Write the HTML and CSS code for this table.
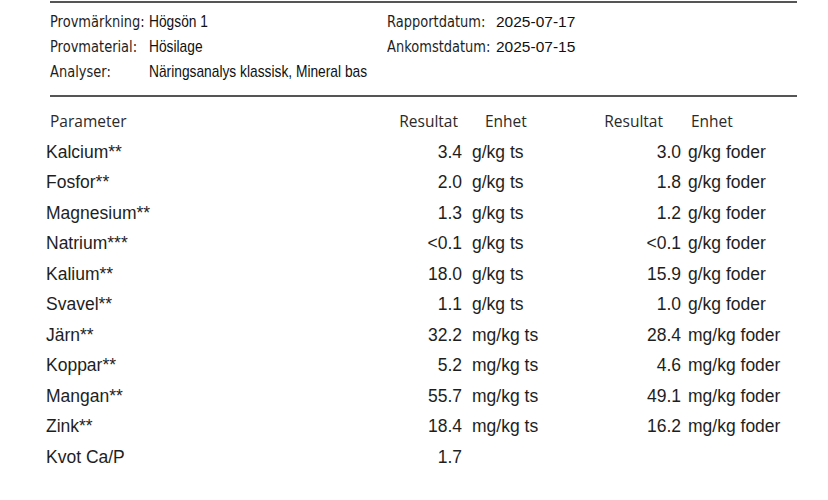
FILE: index.html
```html
<!DOCTYPE html>
<html lang="sv">
<head>
<meta charset="utf-8">
<title>Analysrapport</title>
<link rel="stylesheet" href="styles.css">
</head>
<body>
<div class="page">
  <div class="rule"></div>
  <div class="meta">
    <div class="cell"><span class="lbl">Provmärkning:</span></div><div class="cell"><span class="val">Högsön 1</span></div>
    <div class="cell"><span class="lbl">Rapportdatum:</span></div><div class="cell"><span class="date">2025-07-17</span></div>
    <div class="cell"><span class="lbl">Provmaterial:</span></div><div class="cell"><span class="val">Hösilage</span></div>
    <div class="cell"><span class="lbl">Ankomstdatum:</span></div><div class="cell"><span class="date">2025-07-15</span></div>
    <div class="cell"><span class="lbl">Analyser:</span></div><div class="cell"><span class="val">Näringsanalys klassisk, Mineral bas</span></div>
    <div class="cell"></div><div class="cell"></div>
  </div>
  <div class="rule"></div>

  <div class="table">
    <div class="th th-param">Parameter</div>
    <div class="th th-res1">Resultat</div>
    <div class="th th-unit1">Enhet</div>
    <div class="th th-res2">Resultat</div>
    <div class="th th-unit2">Enhet</div>

    <div class="td p">Kalcium**</div><div class="td n1">3.4</div><div class="td u1">g/kg ts</div><div class="td n2">3.0</div><div class="td u2">g/kg foder</div>
    <div class="td p">Fosfor**</div><div class="td n1">2.0</div><div class="td u1">g/kg ts</div><div class="td n2">1.8</div><div class="td u2">g/kg foder</div>
    <div class="td p">Magnesium**</div><div class="td n1">1.3</div><div class="td u1">g/kg ts</div><div class="td n2">1.2</div><div class="td u2">g/kg foder</div>
    <div class="td p">Natrium***</div><div class="td n1">&lt;0.1</div><div class="td u1">g/kg ts</div><div class="td n2">&lt;0.1</div><div class="td u2">g/kg foder</div>
    <div class="td p">Kalium**</div><div class="td n1">18.0</div><div class="td u1">g/kg ts</div><div class="td n2">15.9</div><div class="td u2">g/kg foder</div>
    <div class="td p">Svavel**</div><div class="td n1">1.1</div><div class="td u1">g/kg ts</div><div class="td n2">1.0</div><div class="td u2">g/kg foder</div>
    <div class="td p">Järn**</div><div class="td n1">32.2</div><div class="td u1">mg/kg ts</div><div class="td n2">28.4</div><div class="td u2">mg/kg foder</div>
    <div class="td p">Koppar**</div><div class="td n1">5.2</div><div class="td u1">mg/kg ts</div><div class="td n2">4.6</div><div class="td u2">mg/kg foder</div>
    <div class="td p">Mangan**</div><div class="td n1">55.7</div><div class="td u1">mg/kg ts</div><div class="td n2">49.1</div><div class="td u2">mg/kg foder</div>
    <div class="td p">Zink**</div><div class="td n1">18.4</div><div class="td u1">mg/kg ts</div><div class="td n2">16.2</div><div class="td u2">mg/kg foder</div>
    <div class="td p">Kvot Ca/P</div><div class="td n1">1.7</div><div class="td u1"></div><div class="td n2"></div><div class="td u2"></div>
  </div>
</div>
</body>
</html>
```
FILE: styles.css
```css
html, body {
  margin: 0;
  padding: 0;
  background: #ffffff;
}

.page {
  width: 828px;
  height: 500px;
  overflow: hidden;
  padding-top: 1px;
  box-sizing: border-box;
}

.rule {
  height: 2px;
  background: #555555;
  margin-left: 50px;
  width: 747px;
}

.meta {
  display: grid;
  grid-template-columns: 99px 238px 109px 1fr;
  grid-auto-rows: 25px;
  margin-left: 50px;
  padding-top: 6px;
  height: 92px;
  box-sizing: border-box;
  align-items: center;
}

.cell {
  white-space: nowrap;
  line-height: 20px;
}

.lbl {
  display: inline-block;
  font-family: "DejaVu Sans", sans-serif;
  font-size: 15.5px;
  color: #1e1e1e;
  transform: scaleX(0.84);
  transform-origin: left center;
}

.val {
  display: inline-block;
  font-family: "Liberation Sans", Arial, sans-serif;
  font-size: 17px;
  color: #111111;
  transform: scaleX(0.81);
  transform-origin: left center;
}

.date {
  font-family: "Liberation Sans", Arial, sans-serif;
  font-size: 15.5px;
  color: #111111;
}

.table {
  display: grid;
  grid-template-columns: 316px 100px 129px 90px 1fr;
  grid-template-rows: 32px;
  grid-auto-rows: 30.5px;
  margin-left: 46px;
  padding-top: 8px;
  align-items: center;
}

.th {
  font-family: "Open Sans", sans-serif;
  font-size: 15.5px;
  color: #2a2a2a;
  white-space: nowrap;
}

.th-param { padding-left: 4px; }
.th-res1 { text-align: right; padding-right: 4px; }
.th-unit1 { padding-left: 23px; }
.th-res2 { text-align: right; padding-right: 18px; }
.th-unit2 { padding-left: 10px; }

.td {
  font-family: "Liberation Sans", Arial, sans-serif;
  font-size: 17.5px;
  color: #1e1e1e;
  white-space: nowrap;
}

.n1, .n2 { text-align: right; }
.u1 { padding-left: 10px; }
.u2 { padding-left: 7px; }
```
